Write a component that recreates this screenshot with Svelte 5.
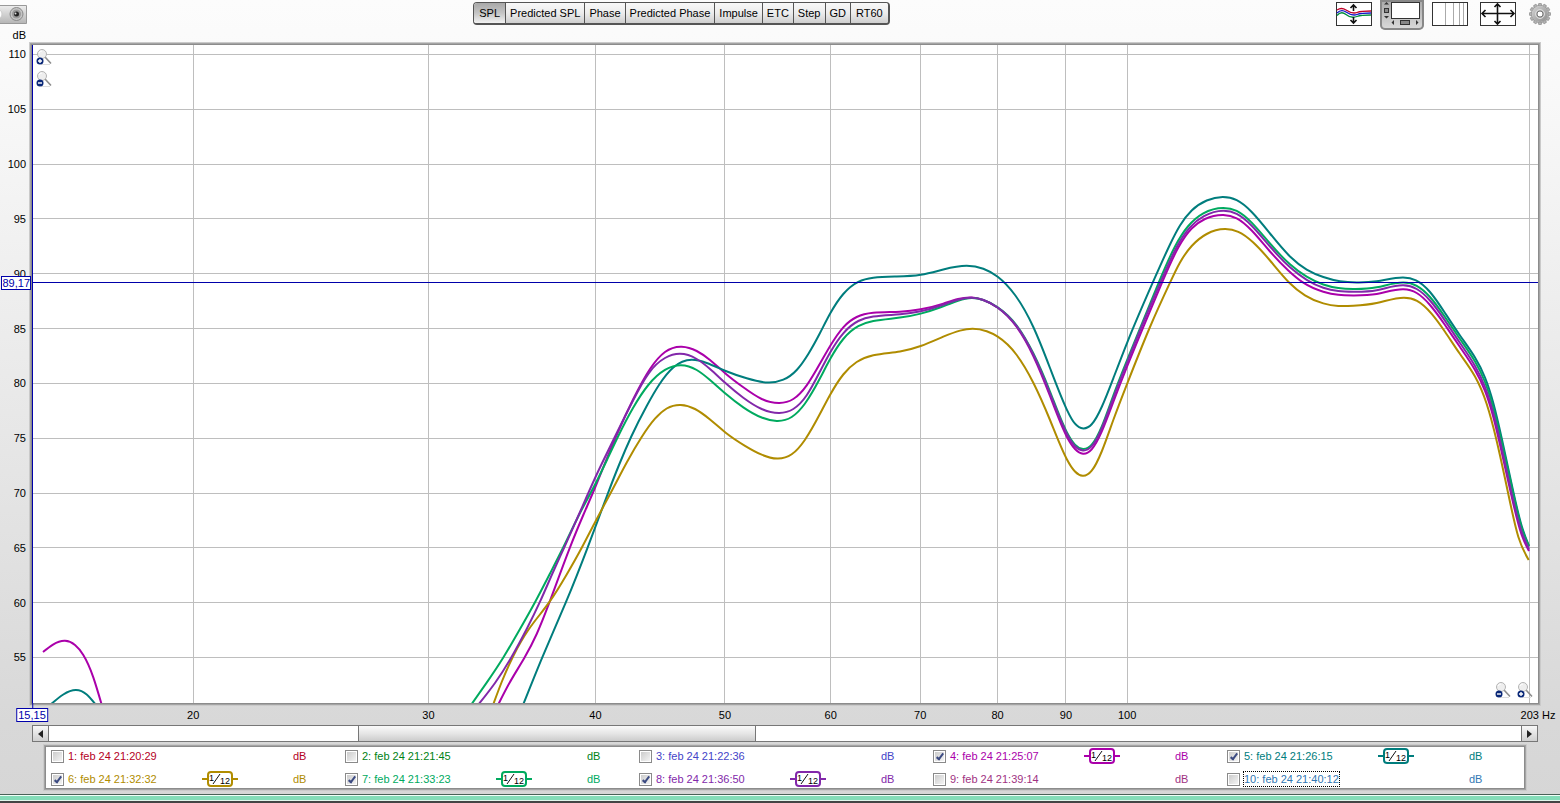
<script lang="ts">
	type Point = [number, number];

	const tabs = ['SPL', 'Predicted SPL', 'Phase', 'Predicted Phase', 'Impulse', 'ETC', 'Step', 'GD', 'RT60'];
	let activeTab = $state('SPL');

	// axis limits and drawing units of the plot
	const fMin = 15.15;
	const fMax = 203;
	const dbMax = 110.86;
	const dbMin = 50.85;
	const left = 32;
	const top = 45;
	const width = 1506;
	const height = 658;

	const levels = [110, 105, 100, 95, 90, 85, 80, 75, 70, 65, 60, 55];
	const freqs = [20, 30, 40, 50, 60, 70, 80, 90, 100];
	const cursor = 89.17;

	function xPart(f: number): number {
		return Math.log(f / fMin) / Math.log(fMax / fMin);
	}

	function yPart(db: number): number {
		return (dbMax - db) / (dbMax - dbMin);
	}

	function gridX(f: number): number {
		return Math.floor(left + xPart(f) * width) + 0.5;
	}

	function gridY(db: number): number {
		return Math.floor(top + yPart(db) * height) + 0.5;
	}

	// slopes of the natural cubic spline through the points
	function splineSlopes(pts: Point[]): number[] {
		const n = pts.length;
		const h = (i: number) => pts[i + 1][0] - pts[i][0];
		const s = (i: number) => (pts[i + 1][1] - pts[i][1]) / h(i);
		const c = [0.5];
		const d = [1.5 * s(0)];
		for (let i = 1; i < n; i++) {
			const last = i === n - 1;
			const lower = last ? 1 : h(i);
			const diag = last ? 2 : 2 * (h(i - 1) + h(i));
			const upper = last ? 0 : h(i - 1);
			const rhs = last ? 3 * s(i - 1) : 3 * (h(i) * s(i - 1) + h(i - 1) * s(i));
			const w = diag - lower * c[i - 1];
			c[i] = upper / w;
			d[i] = (rhs - lower * d[i - 1]) / w;
		}
		for (let i = n - 2; i >= 0; i--) d[i] -= c[i] * d[i + 1];
		return d;
	}

	function curve(pts: Point[]): string {
		const slopes = splineSlopes(pts);
		let d = `M${pts[0][0]} ${pts[0][1]}`;
		for (let i = 1; i < pts.length; i++) {
			const [x0, y0] = pts[i - 1];
			const [x1, y1] = pts[i];
			const h = (x1 - x0) / 3;
			d += `C${x0 + h} ${y0 + slopes[i - 1] * h} ${x1 - h} ${y1 - slopes[i] * h} ${x1} ${y1}`;
		}
		return d;
	}

	let measurements: { id: number; time: string; color: string; on: boolean; parts: Point[][] }[] = $state([
		{ id: 1, time: '21:20:29', color: '#b4001e', on: false, parts: [] },
		{ id: 2, time: '21:21:45', color: '#008214', on: false, parts: [] },
		{ id: 3, time: '21:22:36', color: '#4444c8', on: false, parts: [] },
		{
			id: 4, time: '21:25:07', color: '#aa00aa', on: true,
			parts: [
				[[43, 652], [53, 644.6], [65, 640.8], [75, 645], [83.3, 655], [93.3, 677.3], [101.5, 704]],
				[
					[498, 705], [509.3, 683.3], [524.3, 658], [536.7, 634], [549.3, 602.7], [570, 547.3], [583.3, 515],
					[595.3, 487], [606.7, 459], [618, 432], [633.3, 399], [650, 369], [665, 352], [681.7, 346.7],
					[696.7, 351], [710, 360], [725.7, 373.7], [743.3, 387.3], [761.7, 399], [779.3, 403], [793.3, 399],
					[806.7, 385.3], [820, 363.5], [830.3, 345.7], [843.3, 327.3], [856.7, 317], [873.3, 312.8],
					[900, 311.7], [920.7, 309.3], [943.3, 303.6], [958, 299], [971.7, 297.5], [983.3, 300],
					[997.7, 307.7], [1016.7, 327], [1033.3, 356], [1050, 396], [1066.7, 436.5], [1075, 449],
					[1083, 453.7], [1091.7, 449.3], [1101.7, 431.7], [1113.3, 402], [1127.3, 366], [1150, 311],
					[1162, 282.7], [1178.3, 247.5], [1191.7, 228.5], [1205, 219], [1223.3, 215], [1236.7, 218.3],
					[1251.7, 230.5], [1270, 251.5], [1288.3, 270.5], [1303.3, 282.7], [1323.3, 291.7],
					[1338.3, 294.8], [1353.3, 295.4], [1376.7, 294], [1403.3, 289.3], [1416.7, 293],
					[1430, 305], [1445, 325], [1460, 347], [1475, 370], [1485, 391], [1493.3, 417], [1501, 449],
					[1512, 498], [1521.7, 535], [1529, 551]
				]
			]
		},
		{
			id: 5, time: '21:26:15', color: '#007d7d', on: true,
			parts: [
				[[50, 705], [63.3, 694.5], [76, 690], [86.7, 694.5], [96, 705]],
				[
					[523, 705], [542.3, 657.3], [565.7, 602.7], [587.7, 547.3], [608.3, 492.3], [619, 465],
					[631.3, 436.5], [646.7, 406], [659.3, 384.5], [673.3, 367.5], [691.7, 359.8], [706.7, 363],
					[725.7, 371], [746.7, 378.3], [768.3, 382.5], [783.3, 379.7], [796.7, 370], [808.3, 354],
					[820, 333], [830.3, 313.3], [843.3, 294], [858.3, 281.8], [873.3, 277.7], [896.7, 276.5],
					[920.7, 274.8], [943.3, 269.5], [966.7, 265.8], [983.3, 268.7], [997.7, 276.7], [1015, 295],
					[1033.3, 327], [1050, 368], [1066.7, 409.3], [1075, 423.7], [1083.3, 428.4], [1091.7, 424.3],
					[1101.7, 407], [1113.3, 378.3], [1127.3, 342.3], [1152.7, 282.7], [1170, 244.5], [1180, 225.5],
					[1191.7, 210.5], [1206.7, 200.5], [1222.7, 197], [1236.7, 200.2], [1251.7, 212],
					[1270, 233.5], [1290, 256.5], [1306.7, 269.6], [1323.3, 277], [1340, 281.2], [1356.7, 282.4],
					[1376.7, 281.3], [1403, 277.5], [1416, 280.3], [1430, 292], [1445, 313], [1460, 335.5],
					[1475, 357.5], [1485, 377.5], [1493.3, 403], [1501.7, 438.3], [1513.3, 491.7], [1521.7, 526],
					[1529, 546]
				]
			]
		},
		{
			id: 6, time: '21:32:32', color: '#b08c00', on: true,
			parts: [
				[
					[493, 705], [501.7, 682], [513.3, 656], [528.3, 630], [549.3, 602.2], [566.7, 574.5],
					[582, 547.3], [595.7, 521], [611.7, 491], [627, 462], [641.7, 437], [655, 418.7],
					[666.7, 408.5], [680.7, 404.9], [695, 409], [710, 419.5], [725.7, 432.7], [745, 445.8],
					[761.7, 454.7], [777.3, 458.6], [791.7, 454.3], [805, 439.7], [820, 413.8], [830.3, 394.5],
					[843.3, 374.5], [856.7, 362], [873.3, 355.2], [900, 351.5], [920.7, 346], [943.3, 336.7],
					[960, 330.6], [972.7, 328.8], [986.7, 331.3], [997.7, 336.7], [1016.7, 355], [1033.3, 382.7],
					[1050, 420], [1066.7, 459], [1075, 471.5], [1082.7, 475.8], [1091.7, 470.7], [1101.7, 451.5],
					[1113.3, 420], [1127.3, 383.3], [1150, 327], [1170, 282.7], [1180, 262.5], [1191.7, 246],
					[1206.7, 234], [1225, 229.1], [1238.3, 231.8], [1253.3, 242.5], [1270, 260.5], [1289.3, 282.7],
					[1305, 295.3], [1323.3, 303.4], [1338.3, 305.9], [1353.3, 305.7], [1376.7, 303], [1404, 297.7],
					[1417, 300.8], [1431.7, 313.8], [1445, 331.7], [1460, 354], [1475, 376.5], [1486.7, 404],
					[1496.7, 441], [1508.3, 494], [1518.3, 536.7], [1528.7, 560]
				]
			]
		},
		{
			id: 7, time: '21:33:23', color: '#00aa5f', on: true,
			parts: [
				[
					[471, 705], [486.7, 682.6], [503.3, 657.5], [520, 629], [535, 602.2], [550, 573.5],
					[563.3, 547.3], [580, 513], [595.3, 484], [606.7, 460.5], [618.3, 436], [633.3, 407.5],
					[648.3, 385], [665, 369.9], [681, 365.2], [696.7, 370], [710, 380], [725.7, 393.7],
					[743.3, 407.3], [761.7, 417.5], [776.7, 420.9], [791.7, 417], [805, 403.5], [820, 378.3],
					[830.3, 358.8], [843.3, 339], [858.3, 326.2], [873.3, 321.1], [900, 317.6], [920.7, 313.6],
					[940, 307.5], [958, 300.8], [971.7, 298], [983.3, 300], [997.7, 307.3], [1016.7, 325.5],
					[1033.3, 353.3], [1050, 391.5], [1066.7, 432], [1075, 444.6], [1083, 449], [1091.7, 444.7],
					[1101.7, 426.7], [1113.3, 395.5], [1127.3, 359.5], [1150, 303.8], [1158.7, 282.7], [1175, 246.5],
					[1188.3, 226], [1203.3, 213.3], [1223.3, 207.9], [1236.7, 210.8], [1251.7, 222.6],
					[1270, 243.5], [1290, 264.3], [1306.7, 276.7], [1323.3, 284.5], [1338.3, 288], [1353.3, 289],
					[1376.7, 287.3], [1403.3, 282.5], [1416.7, 285.8], [1430, 297], [1445, 317], [1460, 339],
					[1475, 361.5], [1485, 382], [1493.3, 408], [1501.7, 442], [1513.3, 494], [1521.7, 528],
					[1529, 546.5]
				]
			]
		},
		{
			id: 8, time: '21:36:50', color: '#8228aa', on: true,
			parts: [
				[
					[478, 705], [495, 683], [511.7, 656.7], [526.7, 629], [540, 601.7], [553.3, 571.5],
					[564.3, 547.3], [580, 512], [595.3, 477.5], [604.3, 458.5], [617, 432.5], [633.3, 400],
					[648.3, 373.8], [665, 358], [680, 353.8], [696.7, 359], [710, 369], [725.7, 383.3],
					[743.3, 397.7], [761.7, 409], [779.3, 413], [793.3, 409], [806.7, 395.3], [820, 371.5],
					[830.3, 352.2], [843.3, 333.3], [858.3, 321], [873.3, 316.5], [900, 314.3], [920.7, 311.3],
					[941.7, 305.3], [958, 299.8], [971.7, 297.8], [983.3, 300], [997.7, 307.5], [1016.7, 326.2],
					[1033.3, 354.5], [1050, 393.5], [1066.7, 433.5], [1075, 446.2], [1083, 450.4], [1091.7, 446.2],
					[1101.7, 428.3], [1113.3, 398], [1127.3, 362], [1150, 306.5], [1160.3, 282.7], [1176.7, 247],
					[1190, 227.3], [1204, 216.2], [1223.3, 210.8], [1236.7, 213.8], [1251.7, 225.7], [1270, 246.5],
					[1290, 267.3], [1306.7, 279.8], [1323.3, 287.8], [1338.3, 291], [1353.3, 291.7], [1376.7, 290.2],
					[1403.3, 285.3], [1416.7, 289], [1430, 300.5], [1445, 320.6], [1460, 343], [1475, 366],
					[1485, 387], [1493.3, 413], [1501, 445], [1512, 495], [1521.7, 532], [1529, 549]
				]
			]
		},
		{ id: 9, time: '21:39:14', color: '#a03282', on: false, parts: [] },
		{ id: 10, time: '21:40:12', color: '#3278b4', on: false, parts: [] }
	]);

	const shown = $derived(measurements.filter((m) => m.on));
</script>

{#snippet magnifier(sign: string)}
	<svg viewBox="0 0 16 16" width="16" height="16">
		<path d="M5 15.500H14" stroke="#ddd" />
		<path d="M9 8L15 14.500" stroke="#8c8c8c" stroke-width="1.600" />
		<circle cx="6" cy="5" r="4.500" fill="#eee" stroke="#b4b4b4" />
		<path d="M3 4A3 3 0 0 1 6 2" fill="none" stroke="#fff" />
		<circle cx="4" cy="12" r="3.500" fill="#0a2878" />
		<path d={sign === '+' ? 'M2 12H6M4 10V14' : 'M2 12H6'} stroke="#fff" stroke-width="1.400" />
	</svg>
{/snippet}

<div class="app">
	<header>
		<button class="camera" aria-label="Capture graph">
			<svg viewBox="0 0 27 19" width="27" height="19">
				<defs>
					<linearGradient id="cam" x1="0" y1="0" x2="0" y2="1">
						<stop offset="0" stop-color="#ededed" />
						<stop offset="1" stop-color="#b5b5b5" />
					</linearGradient>
				</defs>
				<path d="M-1 .5H26.500V18.500H-1" fill="url(#cam)" stroke="#999" />
				<circle cx="-3" cy="9" r="5" fill="#fff" stroke="#ccc" />
				<circle cx="16.500" cy="9" r="6.500" fill="#c4c4c4" stroke="#8a8a8a" />
				<circle cx="16.500" cy="9" r="4.500" fill="#9a9a9a" />
				<circle cx="16.500" cy="9" r="2.500" fill="#222" />
				<circle cx="15.500" cy="8.500" r="1" fill="#ddd" />
			</svg>
		</button>

		<nav class="tabs">
			{#each tabs as tab}
				<button class:active={tab === activeTab} onclick={() => (activeTab = tab)}>{tab}</button>
			{/each}
		</nav>

		<div class="tools">
			<button aria-label="Separate traces">
				<svg viewBox="0 0 36 24" width="36" height="24">
					<rect x=".5" y=".5" width="35" height="23" fill="#fff" stroke="#333" />
					<g fill="none" stroke-width="1.300">
						<path d="M1 8C4 6 7 6 10 8S17 12 21 10.500S28 9 35 9" stroke="#c00028" />
						<path d="M1 11C4 8 7 8 10 10S17 14 21 12.500S28 11 35 11" stroke="#1414c8" />
						<path d="M1 13.500C4 10 7 10 10 12.500S17 16 21 14.500S28 13 35 13" stroke="#008c3c" />
					</g>
					<path d="M17.500 3V9M17.500 15V21M14.500 6L17.500 3L20.500 6M14.500 18L17.500 21L20.500 18" fill="none" stroke="#111" stroke-width="1.600" />
				</svg>
			</button>
			<button class="pressed" aria-label="Scrollbars">
				<svg viewBox="0 0 44 30" width="44" height="30">
					<rect x="11.500" y="2.500" width="28" height="16" fill="#fff" stroke="#333" />
					<path d="M4 4.500L6.500 2L9 4.500ZM4 16L6.500 18.500L9 16ZM14 20V25L11.500 22.500ZM36 20V25L38.500 22.500Z" fill="#333" />
					<rect x="4.500" y="8.500" width="4" height="4" fill="#888" stroke="#333" />
					<rect x="20.500" y="20.500" width="9" height="4" fill="#888" stroke="#333" />
				</svg>
			</button>
			<button aria-label="Frequency axis">
				<svg viewBox="0 0 36 24" width="36" height="24">
					<rect x=".5" y=".5" width="35" height="23" fill="#fff" stroke="#333" />
					<path d="M13.500 1V23M21.500 1V23M27.500 1V23M31.500 1V23" stroke="#aaa" />
				</svg>
			</button>
			<button aria-label="Limits">
				<svg viewBox="0 0 36 24" width="36" height="24">
					<rect x=".5" y=".5" width="35" height="23" fill="#fff" stroke="#333" />
					<path d="M2 11.500H34M17.500 2V22M5.500 8L2 11.500L5.500 15M30.500 8L34 11.500L30.500 15M14.500 5L17.500 2L20.500 5M14.500 19L17.500 22L20.500 19" fill="none" stroke="#111" stroke-width="1.600" />
				</svg>
			</button>
			<button aria-label="Controls">
				<svg viewBox="-12 -12 24 24" width="24" height="24">
					<defs>
						<linearGradient id="gear" x1="0" y1="0" x2="1" y2="1">
							<stop offset="0" stop-color="#d4d4d4" />
							<stop offset="1" stop-color="#8c8c8c" />
						</linearGradient>
					</defs>
					{#each Array(12) as _, i}
						<path d="M-2 -8L-1.300 -10.500H1.300L2 -8Z" fill="#b4b4b4" stroke="#828282" stroke-width=".6" transform="rotate({i * 30})" />
					{/each}
					<circle r="8" fill="url(#gear)" />
					<circle r="4.500" fill="none" stroke="#ddd" />
					<circle r="3" fill="#fff" stroke="#777" />
				</svg>
			</button>
		</div>
	</header>

	<main>
		<div class="unit">dB</div>

		<div class="y-axis">
			{#each levels as db}
				<span style:top="{yPart(db) * 100}%">{db}</span>
			{/each}
			<span class="readout" style:top="{yPart(cursor) * 100}%">89,17</span>
		</div>

		<div class="plot">
			<svg class="graph" viewBox="{left} {top} {width} {height}" preserveAspectRatio="none">
				<g class="grid">
					{#each levels as db}
						<path d="M{left} {gridY(db)}H{left + width}" />
					{/each}
					{#each [...freqs, 200] as f}
						<path d="M{gridX(f)} {top}V{top + height}" />
					{/each}
				</g>
				{#each shown as m (m.id)}
					{#each m.parts as part}
						<path class="trace" d={curve(part)} stroke={m.color} />
					{/each}
				{/each}
				<path class="cursor" d="M{left} {gridY(cursor)}H{left + width}M{left + 0.5} {top}V{top + height}" />
			</svg>
			<div class="zoom-y">
				<button aria-label="Zoom in vertically">{@render magnifier('+')}</button>
				<button aria-label="Zoom out vertically">{@render magnifier('-')}</button>
			</div>
			<div class="zoom-x">
				<button aria-label="Zoom out horizontally">{@render magnifier('-')}</button>
				<button aria-label="Zoom in horizontally">{@render magnifier('+')}</button>
			</div>
		</div>

		<div class="x-axis">
			{#each freqs as f}
				<span style:left="{xPart(f) * 100}%">{f}</span>
			{/each}
			<span class="end">203 Hz</span>
			<span class="readout">15,15</span>
		</div>

		<div class="scrollbar">
			<button aria-label="Scroll left"><svg viewBox="0 0 5 8" width="5" height="8"><path d="M5 0V8L0 4Z" /></svg></button>
			<div class="track"><div class="thumb"></div></div>
			<button aria-label="Scroll right"><svg viewBox="0 0 5 8" width="5" height="8"><path d="M0 0V8L5 4Z" /></svg></button>
		</div>
	</main>

	<section class="legend">
		{#each measurements as m (m.id)}
			<div class="item" style:color={m.color}>
				<input type="checkbox" id="m{m.id}" bind:checked={m.on} />
				<label for="m{m.id}" class:focused={m.id === 10}>{m.id}: feb 24 {m.time}</label>
				<span class="smoothing">
					{#if m.parts.length}
						<svg viewBox="0 0 36 18" width="36" height="18">
							<path d="M0 9H5M31 9H36" stroke="currentColor" stroke-width="2" />
							<rect x="6" y="2" width="24" height="14" rx="3" fill="#fff" stroke="currentColor" stroke-width="2" />
							<path d="M11 14L18 4" stroke="#111" />
							<text x="7" y="11">1</text>
							<text x="18" y="14">12</text>
						</svg>
					{/if}
				</span>
				<span>dB</span>
			</div>
		{/each}
	</section>

	<footer></footer>
</div>

<style>
	:global(body) {
		margin: 0;
	}

	.app {
		display: flex;
		flex-direction: column;
		height: 100vh;
		min-height: 400px;
		overflow: hidden;
		background: linear-gradient(#fcfcfc 0%, #fafafa 8%, #d8d8d8 90%, #d6d6d6 100%);
		font-family: 'Liberation Sans', Arial, sans-serif;
		font-size: 11px;
		line-height: 14px;
		color: #000;
	}

	button {
		padding: 0;
		border: 0;
		background: none;
		font: inherit;
		color: inherit;
	}

	svg {
		display: block;
	}

	header {
		display: flex;
		justify-content: space-between;
		align-items: flex-start;
		height: 28px;
	}

	.camera {
		margin-top: 5px;
	}

	.tabs {
		display: flex;
		margin-top: 2px;
		border: 1px solid #555;
		border-width: 1px 2px 2px 1px;
		border-radius: 4px;
		overflow: hidden;
	}

	.tabs button {
		height: 20px;
		padding: 0 4px;
		border-right: 1px solid #555;
		background: linear-gradient(#f8f8f8, #ececec 50%, #cfcfcf);
	}

	.tabs button:first-child {
		padding: 0 5px;
	}

	.tabs button:last-child {
		border-right: 0;
		padding: 0 5px;
	}

	.tabs button.active {
		background: linear-gradient(#a8a8a8, #c4c4c4 50%, #f2f2f2);
	}

	.tools {
		display: flex;
		gap: 12px;
		padding-right: 8px;
	}

	.tools button {
		height: 24px;
		margin-top: 2px;
	}

	.tools .pressed {
		height: 30px;
		margin: 0 -4px;
		border-radius: 0 0 5px 5px;
		background: linear-gradient(#a8a8a8, #dcdcdc);
		box-shadow: inset 0 0 0 2px #888;
	}

	main {
		flex: 1;
		display: grid;
		grid-template-columns: 32px 1fr;
		grid-template-rows: 17px 1fr 22px 17px;
		padding-right: 22px;
		min-height: 0;
	}

	.unit {
		grid-column: 1;
		padding-right: 6px;
		text-align: right;
	}

	.y-axis {
		grid-area: 2 / 1;
		position: relative;
	}

	.y-axis span {
		position: absolute;
		right: 6px;
		transform: translateY(-50%);
	}

	.readout {
		box-sizing: border-box;
		border: 1px solid #0000aa;
		background: #fff;
		color: #0000aa;
		line-height: 12px;
		padding: 0 1px;
	}

	.y-axis .readout {
		right: 1px;
		padding: 0;
	}

	.plot {
		grid-area: 2 / 2;
		position: relative;
		background: #fff;
		box-shadow: 0 0 0 1px #8c8c8c, 0 0 0 2px #a4a4a4, 0 0 0 3px #cacaca;
	}

	/* the value box lies over the frame of the plot */
	.y-axis .readout,
	.x-axis .readout {
		z-index: 1;
	}

	.graph {
		position: absolute;
		width: 100%;
		height: 100%;
	}

	.graph path {
		fill: none;
		vector-effect: non-scaling-stroke;
	}

	.grid path {
		stroke: #bebebe;
	}

	.trace {
		stroke-width: 2;
	}

	.cursor {
		stroke: #0000aa;
	}

	.zoom-y,
	.zoom-x {
		position: absolute;
		display: flex;
		gap: 6px;
	}

	.zoom-y {
		flex-direction: column;
		left: 4px;
		top: 4px;
	}

	.zoom-x {
		right: 5px;
		bottom: 5px;
	}

	.x-axis {
		grid-area: 3 / 2;
		position: relative;
	}

	.x-axis span {
		position: absolute;
		top: 5px;
		transform: translateX(-50%);
		white-space: nowrap;
	}

	.x-axis .end {
		left: 100%;
	}

	.x-axis .readout {
		left: 0;
	}

	.x-axis .readout::before {
		content: '';
		position: absolute;
		left: 15px;
		bottom: 100%;
		height: 6px;
		border-left: 1px solid #0000aa;
	}

	.scrollbar {
		grid-area: 4 / 2;
		display: flex;
		box-sizing: border-box;
		border: 1px solid #777;
		background: #fff;
	}

	.scrollbar button {
		display: grid;
		place-items: center;
		width: 15px;
		background: linear-gradient(#f8f8f8, #d0d0d0);
	}

	.scrollbar path {
		fill: #222;
	}

	.track {
		flex: 1;
		border: 1px solid #777;
		border-width: 0 1px;
	}

	.thumb {
		box-sizing: border-box;
		width: 27%;
		height: 100%;
		margin-left: 21%;
		border: 1px solid #777;
		border-width: 0 1px;
		background: linear-gradient(#fafafa, #e6e6e6 50%, #cccccc);
	}

	.legend {
		display: grid;
		grid-template-columns: repeat(5, 1fr);
		row-gap: 5px;
		margin: 5px 36px 6px 46px;
		padding: 0 3px 0 5px;
		background: #fff;
		box-shadow: 0 0 0 1px #8c8c8c, 0 0 0 2px #a4a4a4, 0 0 0 3px #cacaca;
	}

	.item {
		display: grid;
		grid-template-columns: 17px 134px 36px 55px auto;
		align-items: center;
		height: 18px;
	}

	.smoothing {
		grid-column: 3 / 5;
	}

	.smoothing text {
		font-size: 9px;
		fill: #000;
	}

	.focused {
		justify-self: start;
		outline: 1px dotted #000;
		white-space: nowrap;
	}

	input {
		appearance: none;
		position: relative;
		width: 13px;
		height: 13px;
		margin: 0;
		border: 1px solid #8a8a8a;
		background: linear-gradient(135deg, #c8c8c8, #f8f8f8);
		box-shadow: inset 0 0 0 1px #fff;
	}

	input:checked::after {
		content: '';
		position: absolute;
		left: 4px;
		top: 1px;
		width: 2px;
		height: 6px;
		border: solid #3c4b82;
		border-width: 0 2px 2px 0;
		transform: rotate(38deg);
	}

	footer {
		height: 6px;
		border-top: 1px solid #4a6258;
		border-bottom: 2px solid #444;
		background: #84dcb8;
		box-shadow: inset 0 1px #f0fff8, inset 0 -1px #e0f6ec;
	}
</style>
